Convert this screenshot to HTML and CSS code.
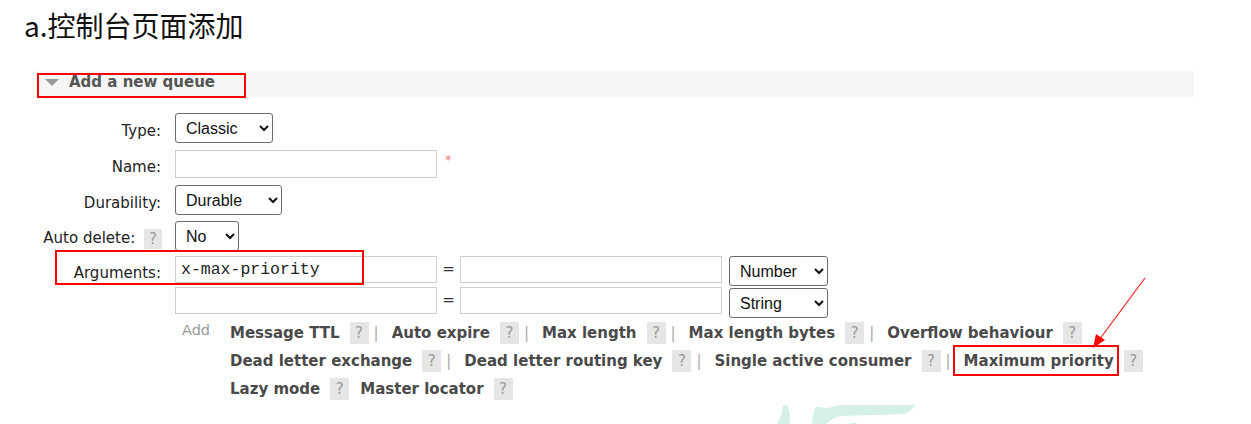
FILE: index.html
```html
<!DOCTYPE html>
<html lang="zh">
<head>
<meta charset="utf-8">
<title>Add a new queue</title>
<link rel="stylesheet" href="styles.css">
</head>
<body>
<div class="page">
  <h1 class="title">a.控制台页面添加</h1>

  <div class="section">
    <div class="section-head">
      <span class="tri"></span>
      <span class="head-text">Add a new queue</span>
      <span class="anno-head"></span>
    </div>

    <div class="form">
      <div class="row r1">
        <label class="lbl">Type:</label>
        <div class="ctl"><select class="sel sel-type"><option>Classic</option></select></div>
      </div>
      <div class="row r2">
        <label class="lbl">Name:</label>
        <div class="ctl"><input class="inp inp-name" type="text"><span class="req">*</span></div>
      </div>
      <div class="row r3">
        <label class="lbl">Durability:</label>
        <div class="ctl"><select class="sel sel-dur"><option>Durable</option></select></div>
      </div>
      <div class="row r4">
        <label class="lbl">Auto delete: <span class="help">?</span></label>
        <div class="ctl"><select class="sel sel-ad"><option>No</option></select></div>
      </div>
      <div class="row r5">
        <label class="lbl">Arguments:</label>
        <div class="ctl args">
          <input class="inp inp-key mono" type="text" value="x-max-priority">
          <span class="eq">=</span>
          <input class="inp inp-val" type="text">
          <select class="sel sel-arg"><option>Number</option></select>
        </div>
      </div>
      <div class="row r6">
        <span class="lbl"></span>
        <div class="ctl args">
          <input class="inp inp-key" type="text">
          <span class="eq">=</span>
          <input class="inp inp-val" type="text">
          <select class="sel sel-arg sel-str"><option>String</option></select>
        </div>
      </div>
      <div class="row r7">
        <span class="lbl"></span>
        <div class="ctl addrow">
          <span class="add">Add</span>
          <div class="links">
            <div class="line">
              <span class="lk">Message TTL</span><span class="help">?</span><span class="sep">|</span>
              <span class="lk">Auto expire</span><span class="help">?</span><span class="sep">|</span>
              <span class="lk">Max length</span><span class="help">?</span><span class="sep">|</span>
              <span class="lk">Max length bytes</span><span class="help">?</span><span class="sep">|</span>
              <span class="lk">Overflow behaviour</span><span class="help">?</span>
            </div>
            <div class="line">
              <span class="lk">Dead letter exchange</span><span class="help">?</span><span class="sep">|</span>
              <span class="lk">Dead letter routing key</span><span class="help">?</span><span class="sep">|</span>
              <span class="lk">Single active consumer</span><span class="help">?</span><span class="sep">|</span>
              <span class="lk mark">Maximum priority</span><span class="help">?</span>
            </div>
            <div class="line">
              <span class="lk">Lazy mode</span><span class="help">?</span><span class="gap"></span>
              <span class="lk">Master locator</span><span class="help">?</span>
            </div>
          </div>
        </div>
      </div>
    </div>
    <span class="anno-args"></span>
  </div>

  <svg class="arrow" width="70" height="80" viewBox="0 0 70 80">
    <line x1="62" y1="2" x2="16" y2="64" stroke="#ff2020" stroke-width="1.2"/>
    <polygon points="10,72 13,58 22,64" fill="#ff0000"/>
  </svg>

  <svg class="wm" width="160" height="24" viewBox="0 0 160 24">
    <path d="M0 24 C4 18 7 10 8 1 L12 1 C16 8 15 17 14 24 Z" fill="#d5efe9"/>
    <path d="M37 24 C37 16 38 8 41 3 C43 2 47 4 52 4 C57 4 60 1 66 1 L140 1 C137 6 133 9 128 10 L68 12 C60 13 55 16 52 19 L52 24 Z" fill="#d5efe9"/>
    <path d="M70 24 C74 18 80 17 86 22 L88 24 Z" fill="#d5efe9"/>
  </svg>
</div>
</body>
</html>
```

FILE: styles.css
```css
html, body {
  margin: 0;
  padding: 0;
  background: #ffffff;
}

.page {
  position: relative;
  width: 1251px;
  height: 424px;
  overflow: hidden;
  font-family: "DejaVu Sans", Verdana, sans-serif;
  color: #222;
}

.title {
  margin: 0;
  padding: 6px 0 0 24px;
  height: 36px;
  font-family: "Noto Sans CJK SC", "Noto Sans", sans-serif;
  font-weight: 400;
  font-size: 28px;
  line-height: 38px;
  color: #111;
}

.section {
  position: relative;
  margin: 29px 0 0 36px;
  width: 1158px;
}

.section-head {
  position: relative;
  height: 26px;
  background: #f6f6f6;
  display: flex;
  align-items: center;
}

.tri {
  width: 0;
  height: 0;
  margin: 0 0 4px 9px;
  border-left: 7px solid transparent;
  border-right: 7px solid transparent;
  border-top: 7px solid #9a9a9a;
}

.head-text {
  margin: 0 0 4px 10px;
  font-weight: bold;
  font-size: 15px;
  color: #555;
}

.anno-head {
  position: absolute;
  left: 1px;
  top: 2px;
  width: 209px;
  height: 25px;
  box-sizing: border-box;
  border: 2px solid #ff0000;
}

.anno-args {
  position: absolute;
  left: 19px;
  top: 179px;
  width: 309px;
  height: 35px;
  box-sizing: border-box;
  border: 2px solid #ff0000;
}

.form {
  padding-top: 16px;
}

.row {
  display: grid;
  grid-template-columns: 125px 1fr;
  column-gap: 14px;
  align-items: start;
}

.r1 { height: 37px; }
.r2 { height: 35px; }
.r3 { height: 36px; }
.r4 { height: 35px; }
.r5 { height: 31px; }
.r6 { height: 32px; }

.lbl {
  display: block;
  text-align: right;
  font-size: 15px;
  line-height: 30px;
  padding-top: 3px;
  color: #222;
  white-space: nowrap;
}

.r2 .lbl { line-height: 28px; }
.r5 .lbl { line-height: 27px; padding-top: 4px; }

.r4 .lbl {
  margin-right: -1px;
  padding-top: 2px;
}

.ctl {
  display: flex;
  align-items: flex-start;
}

.sel {
  height: 30px;
  box-sizing: border-box;
  font-family: "Liberation Sans", Arial, sans-serif;
  font-size: 16px;
  color: #111;
  background: #fff;
  border: 1px solid #6b6b6b;
  border-radius: 3px;
  padding: 0 0 0 6px;
}

.sel-type { width: 98px; }
.sel-dur { width: 107px; }
.sel-ad { width: 64px; }
.sel-arg { width: 99px; margin-left: 7px; }
.sel-str { margin-top: 1px; }

.inp {
  box-sizing: border-box;
  height: 28px;
  border: 1px solid #cfcfcf;
  border-radius: 0;
  background: #fff;
  padding: 0 6px;
  font-family: "Liberation Sans", Arial, sans-serif;
  font-size: 15px;
  outline: none;
}

.inp-name { width: 262px; }

.req {
  margin-left: 8px;
  margin-top: 2px;
  font-size: 13px;
  color: #ff8080;
}

.inp-key, .inp-val {
  width: 262px;
  height: 27px;
}

.mono {
  font-family: "Liberation Mono", "Courier New", monospace;
  font-size: 16.5px;
  color: #222;
  padding-left: 5px;
}

.eq {
  width: 23px;
  text-align: center;
  font-size: 15px;
  line-height: 27px;
  color: #333;
}

.addrow {
  padding-left: 7px;
}

.add {
  width: 48px;
  flex: none;
  font-size: 14.5px;
  line-height: 22px;
  color: #9a9a9a;
}

.links {
  display: flex;
  flex-direction: column;
}

.line {
  display: flex;
  align-items: center;
  height: 28px;
  white-space: nowrap;
}

.lk {
  font-weight: bold;
  font-size: 15px;
  color: #4a4a4a;
}

.help {
  display: inline-block;
  width: 19px;
  height: 22px;
  margin-left: 10px;
  background: #e6e6e6;
  color: #999;
  font-size: 15px;
  font-weight: normal;
  line-height: 22px;
  text-align: center;
}

.lbl .help {
  width: 18px;
  height: 20px;
  line-height: 20px;
  margin-left: 4px;
  vertical-align: middle;
}

.sep {
  margin: 0 13px 0 5px;
  font-size: 15px;
  color: #aaa;
}

.gap {
  width: 11px;
}

.mark {
  position: relative;
}

.mark::after {
  content: "";
  position: absolute;
  left: -11px;
  right: -5px;
  top: -7px;
  bottom: -6px;
  border: 2px solid #ff0000;
}

.arrow {
  position: absolute;
  left: 1083px;
  top: 276px;
}

.wm {
  position: absolute;
  left: 775px;
  top: 404px;
}
```
